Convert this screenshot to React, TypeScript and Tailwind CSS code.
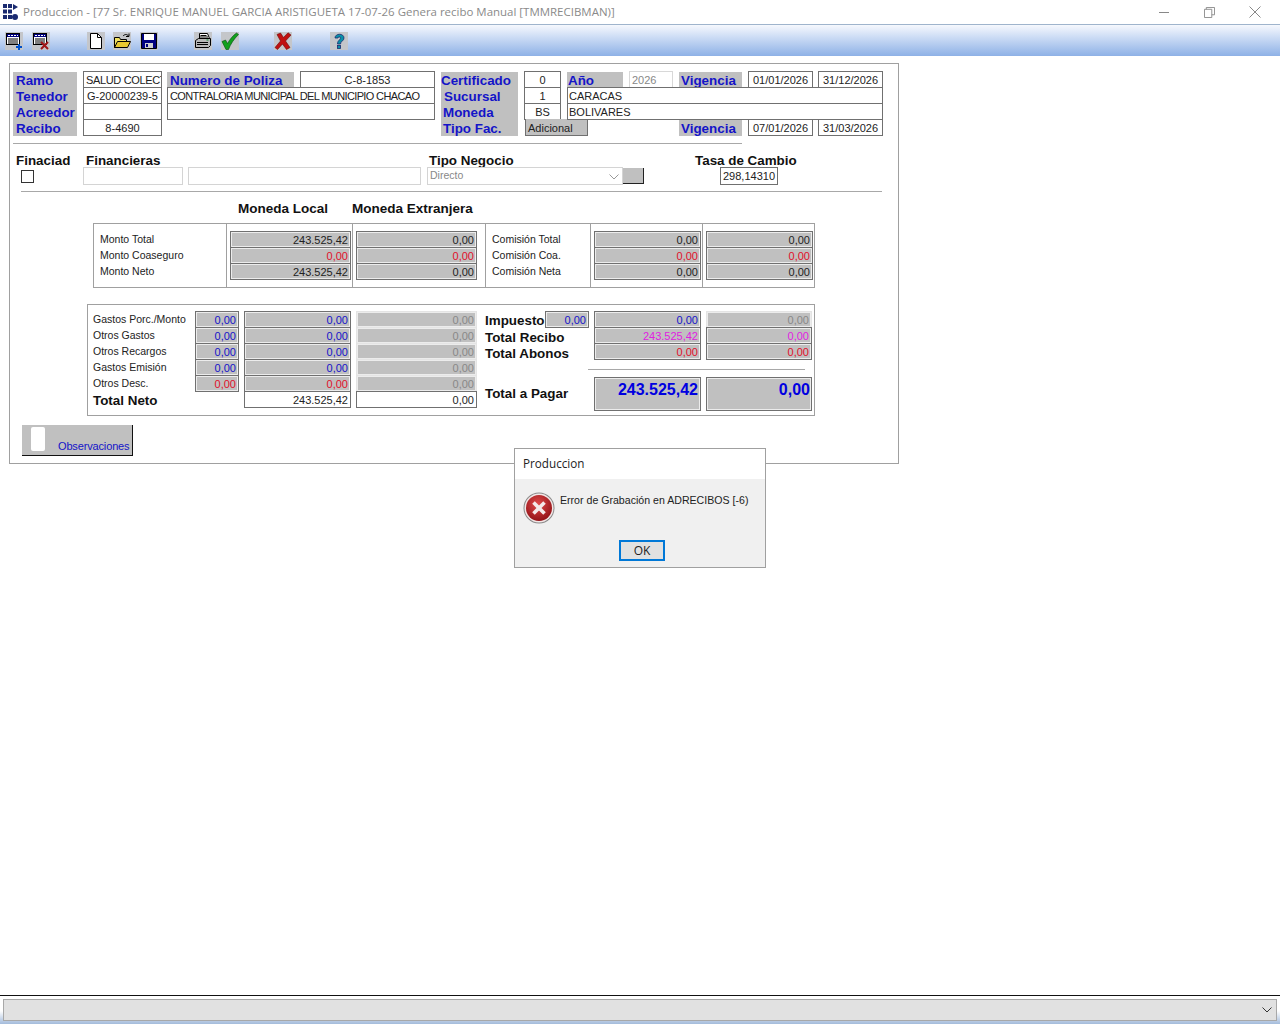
const arial = { fontFamily: '"Liberation Sans", Arial, sans-serif' }

function Field({ className, children }: { className: string; children?: React.ReactNode }) {
  return (
    <div className={`flex h-[17px] shrink-0 items-center overflow-hidden whitespace-nowrap border border-[#707070] bg-white pt-[2px] text-[11px] leading-none text-[#222] ${className}`}>
      {children}
    </div>
  )
}

function Amount({ value, className, color = "text-[#222]", off = false }: { value: string; className: string; color?: string; off?: boolean }) {
  return (
    <div className={`flex h-[17px] shrink-0 items-center justify-end border bg-[#c0c0c0] pr-[2px] pt-[2px] text-[11px] leading-none outline outline-1 -outline-offset-2 outline-white/70 ${off ? "border-[#e4e4e4]" : "border-[#707070]"} ${color} ${className}`}>
      {value}
    </div>
  )
}

function Stack({ children, className = "" }: { children: React.ReactNode; className?: string }) {
  return <div className={`flex shrink-0 flex-col [&>*+*]:-mt-px ${className}`}>{children}</div>
}

function Tool({ children, className }: { children: React.ReactNode; className: string }) {
  return <div className={`h-[18px] w-[18px] shrink-0 bg-[#c4c6ca] ${className}`}>{children}</div>
}

function TableIcon() {
  return (
    <>
      <rect x="1.5" y="1.5" width="13" height="11" fill="#fff" stroke="#000" />
      <rect x="2" y="2" width="12" height="3" fill="#000080" />
      <path d="M3 3.500h2M6 3.500h2M9 3.500h2M12 3.500h1" stroke="#fff" />
      <path d="M3 7h10M3 9h10M3 11h10" stroke="#000" />
    </>
  )
}

function Toolbar() {
  return (
    <div className="flex h-[32px] shrink-0 items-center border-t border-[#9fb4cc] bg-gradient-to-b from-[#f6f8fd] to-[#8eb1e6] pl-[5px]">
      <Tool className="">
        <svg viewBox="0 0 18 18" className="h-full w-full"><TableIcon /><path d="M14 12v6M11 15h6" stroke="#0050c8" strokeWidth="2" /></svg>
      </Tool>
      <Tool className="ml-[9px]">
        <svg viewBox="0 0 18 18" className="h-full w-full"><TableIcon /><path d="M9 10l7 7M16 10l-7 7" stroke="#a01818" strokeWidth="2" /></svg>
      </Tool>
      <Tool className="ml-[37px]">
        <svg viewBox="0 0 18 18" className="h-full w-full"><path d="M3.500 1.500h7l4 4v11h-11z" fill="#fff" stroke="#000" /><path d="M10.500 1.500v4h4" fill="none" stroke="#000" /></svg>
      </Tool>
      <Tool className="ml-[8px]">
        <svg viewBox="0 0 18 18" className="h-full w-full"><path d="M1.500 5.500h5l1 2h6v8h-12z" fill="#f0e060" stroke="#000" /><path d="M1.500 15.500l3-6h13l-3 6z" fill="#e8c830" stroke="#000" /><path d="M10 4c2-2 4-2 5.500 0M16 1.500v3h-3" fill="none" stroke="#000" /></svg>
      </Tool>
      <Tool className="ml-[9px]">
        <svg viewBox="0 0 18 18" className="h-full w-full"><path d="M1.500 1.500h15v15h-15z" fill="#000080" stroke="#000" /><rect x="4" y="2" width="10" height="6" fill="#fff" /><rect x="5" y="11" width="8" height="5" fill="#d0d0d0" /><rect x="6" y="12" width="2" height="3" fill="#000080" /></svg>
      </Tool>
      <Tool className="ml-[36px]">
        <svg viewBox="0 0 18 18" className="h-full w-full"><path d="M5.500 1.500h8l2 5h-10z" fill="#fff" stroke="#000" /><path d="M6.500 3.500h6M6 5h8" stroke="#000" /><path d="M1.500 8.500l3-2h12v7l-2 2h-13z" fill="#b8b8b8" stroke="#000" /><path d="M3 10.500h11M3 12.500h11" stroke="#000" /><path d="M12.500 8h2" stroke="#0a8a30" /></svg>
      </Tool>
      <Tool className="ml-[9px]">
        <svg viewBox="0 0 18 18" className="h-full w-full"><path d="M1 9.500l3.500-1.500 2 3.500C9 7 12 3.500 15.500 1L17.500 2.500C13 7 9.500 12 7.500 17.500H5z" fill="#12a01c" stroke="#064a10" strokeWidth="0.6" /></svg>
      </Tool>
      <Tool className="ml-[35px]">
        <svg viewBox="0 0 18 18" className="h-full w-full"><path d="M3 2.500L6.500 1l3 4.500L14 .8 17 3l-5.500 6 4.500 6.500-3.500 2L8.500 12l-5 5.500-2.500-2L6.500 9z" fill="#c01010" stroke="#6a0808" strokeWidth="0.6" /></svg>
      </Tool>
      <Tool className="ml-[38px]">
        <svg viewBox="0 0 18 18" className="h-full w-full"><path d="M5 6c0-5 9-5 9 0 0 3-3.500 3-3.500 6H7.500c0-4 3-4 3-6 0-1.500-2.500-1.500-2.500 0z" fill="#0890a8" stroke="#1a2a70" strokeWidth="0.8" /><rect x="7.500" y="13.500" width="3" height="3" fill="#0890a8" stroke="#1a2a70" strokeWidth="0.8" /></svg>
      </Tool>
    </div>
  )
}

function HeaderBlock() {
  const label = "text-[13.400px] font-bold leading-[16px] text-[#1414c8]"
  return (
    <div className={`flex items-start pl-[3px] pt-[7px] ${label}`}>
      <div className="mt-px h-[64px] w-[64px] shrink-0 bg-[#c0c0c0] pl-[3px] pt-px">
        <div>Ramo</div>
        <div>Tenedor</div>
        <div>Acreedor</div>
        <div className="h-[15px]">Recibo</div>
      </div>
      <Stack className="ml-[6px] w-[79px] font-normal">
        <Field className="w-full pl-[2px] tracking-[-0.35px]">SALUD COLECT</Field>
        <Field className="w-full justify-center">G-20000239-5</Field>
        <Field className="w-full" />
        <Field className="w-full justify-center">8-4690</Field>
      </Stack>
      <Stack className="ml-[5px] w-[268px]">
        <div className="flex items-start">
          <div className="mt-px h-[16px] w-[127px] overflow-hidden bg-[#c0c0c0] pl-[3px] pt-px">Numero de Poliza</div>
          <Field className="ml-[6px] w-[135px] justify-center font-normal">C-8-1853</Field>
        </div>
        <Field className="w-full pl-[2px] font-normal tracking-[-0.63px]">CONTRALORIA MUNICIPAL DEL MUNICIPIO CHACAO</Field>
        <Field className="w-full" />
      </Stack>
      <div className="ml-[6px] mt-px h-[64px] w-[77px] shrink-0 bg-[#c0c0c0]">
        <div className="pt-px">Certificado</div>
        <div className="pl-[3px]">Sucursal</div>
        <div className="pl-[2px]">Moneda</div>
        <div className="pl-[2px]">Tipo Fac.</div>
      </div>
      <Stack className="ml-[6px] w-[37px] font-normal">
        <Field className="w-full justify-center">0</Field>
        <Field className="w-full justify-center">1</Field>
        <Field className="w-full justify-center">BS</Field>
        <div className="ml-px flex h-[17px] w-[63px] items-center border-x border-b border-[#707070] bg-[#c0c0c0] pl-[2px] pt-[2px] text-[11px] leading-none text-[#222]">Adicional</div>
      </Stack>
      <div className="ml-[6px] flex w-[316px] shrink-0 flex-col">
        <div className="flex items-start">
          <div className="mt-px h-[16px] w-[56px] shrink-0 overflow-hidden bg-[#c0c0c0] pl-px pt-px">Año</div>
          <Field className="ml-[6px] w-[44px] border-[#d8d8d8] pl-[2px] font-normal text-[#888]">2026</Field>
          <div className="ml-[6px] mt-px h-[16px] w-[63px] shrink-0 overflow-hidden bg-[#c0c0c0] pl-[2px] pt-px">Vigencia</div>
          <Field className="ml-[6px] w-[65px] justify-center font-normal">01/01/2026</Field>
          <Field className="ml-[5px] w-[65px] justify-center font-normal">31/12/2026</Field>
        </div>
        <Stack className="-mt-px w-full">
          <Field className="w-full pl-[1px] font-normal">CARACAS</Field>
          <Field className="w-full pl-[1px] font-normal">BOLIVARES</Field>
        </Stack>
        <div className="-mt-px flex items-start">
          <div className="ml-[112px] mt-px h-[16px] w-[63px] shrink-0 overflow-hidden bg-[#c0c0c0] pl-[2px] pt-px">Vigencia</div>
          <Field className="ml-[6px] w-[65px] justify-center font-normal">07/01/2026</Field>
          <Field className="ml-[5px] w-[65px] justify-center font-normal">31/03/2026</Field>
        </div>
      </div>
    </div>
  )
}

function Financing() {
  const head = "text-[13.400px] font-bold leading-[15px] text-[#111]"
  const soft = "flex h-[18px] shrink-0 items-center border border-[#d4d4d4] bg-white"
  return (
    <div className="mt-[9px]">
      <div className={`flex ${head}`}>
        <span className="ml-[6px] w-[70px]">Finaciad</span>
        <span className="w-[343px]">Financieras</span>
        <span className="w-[266px]">Tipo Negocio</span>
        <span>Tasa de Cambio</span>
      </div>
      <div className="-mt-px flex items-center">
        <div className="ml-[11px] h-[13px] w-[13px] shrink-0 border border-[#333] bg-white" />
        <div className={`ml-[49px] w-[100px] ${soft}`} />
        <div className={`ml-[5px] w-[233px] ${soft}`} />
        <div className={`ml-[6px] w-[196px] justify-between pb-[2px] pl-[2px] pr-[3px] text-[10.500px] leading-none text-[#888] ${soft}`}>
          Directo
          <svg viewBox="0 0 10 6" className="mt-[3px] h-[6px] w-[10px]"><path d="M.5.5 5 5 9.500.5" fill="none" stroke="#999" /></svg>
        </div>
        <div className="h-[16px] w-[21px] shrink-0 border-b border-r border-[#222] bg-[#c0c0c0]" />
        <div className="ml-[76px] flex h-[18px] w-[58px] shrink-0 items-center justify-center border border-[#707070] bg-white text-[11px] leading-none text-[#222]">298,14310</div>
      </div>
      <div className="ml-[11px] mt-[6px] h-px w-[861px] bg-[#a8a8a8]" />
    </div>
  )
}

function Label({ text }: { text: string }) {
  return <div className="h-[16px] text-[10.500px] leading-[16px] text-[#222]">{text}</div>
}

function Totals() {
  return (
    <div className="ml-[83px] mt-[6px] flex h-[65px] w-[722px] items-stretch border border-[#a0a0a0]">
      <div className="w-[132px] shrink-0 pl-[6px] pt-[7px]">
        <Label text="Monto Total" />
        <Label text="Monto Coaseguro" />
        <Label text="Monto Neto" />
      </div>
      <div className="w-[126px] shrink-0 border-l border-[#a0a0a0] pl-[3px] pt-[7px]">
        <Stack>
          <Amount className="w-[121px]" value="243.525,42" />
          <Amount className="w-[121px]" value="0,00" color="text-[#e0102a]" />
          <Amount className="w-[121px]" value="243.525,42" />
        </Stack>
      </div>
      <div className="w-[133px] shrink-0 border-l border-[#a0a0a0] pl-[3px] pt-[7px]">
        <Stack>
          <Amount className="w-[121px]" value="0,00" />
          <Amount className="w-[121px]" value="0,00" color="text-[#e0102a]" />
          <Amount className="w-[121px]" value="0,00" />
        </Stack>
      </div>
      <div className="w-[105px] shrink-0 border-l border-[#a0a0a0] pl-[6px] pt-[7px]">
        <Label text="Comisión Total" />
        <Label text="Comisión Coa." />
        <Label text="Comisión Neta" />
      </div>
      <div className="w-[112px] shrink-0 border-l border-[#a0a0a0] pl-[3px] pt-[7px]">
        <Stack>
          <Amount className="w-[107px]" value="0,00" />
          <Amount className="w-[107px]" value="0,00" color="text-[#e0102a]" />
          <Amount className="w-[107px]" value="0,00" />
        </Stack>
      </div>
      <div className="flex-1 border-l border-[#a0a0a0] pl-[3px] pt-[7px]">
        <Stack>
          <Amount className="w-[107px]" value="0,00" />
          <Amount className="w-[107px]" value="0,00" color="text-[#e0102a]" />
          <Amount className="w-[107px]" value="0,00" />
        </Stack>
      </div>
    </div>
  )
}

function Charges() {
  const blue = "text-[#1414c8]"
  const red = "text-[#e0102a]"
  const off = "text-[#888]"
  const pink = "text-[#e020e0]"
  const strong = "h-[16px] text-[13.400px] font-bold leading-[16px] text-[#111]"
  const big = "flex h-[34px] shrink-0 justify-end border border-[#707070] bg-[#c0c0c0] pt-[2px] text-[16px] font-bold leading-[20px] text-[#0000e0] outline outline-1 -outline-offset-2 outline-white/70"
  return (
    <div className="ml-[77px] mt-[16px] flex h-[112px] w-[728px] border border-[#a0a0a0] pt-[6px]">
      <div className="w-[106px] shrink-0 pl-[5px]">
        <Label text="Gastos Porc./Monto" />
        <Label text="Otros Gastos" />
        <Label text="Otros Recargos" />
        <Label text="Gastos Emisión" />
        <Label text="Otros Desc." />
        <div className={`mt-[2px] ${strong}`}>Total Neto</div>
      </div>
      <Stack className="ml-px">
        <Amount className="w-[44px]" value="0,00" color={blue} />
        <Amount className="w-[44px]" value="0,00" color={blue} />
        <Amount className="w-[44px]" value="0,00" color={blue} />
        <Amount className="w-[44px]" value="0,00" color={blue} />
        <Amount className="w-[44px]" value="0,00" color={red} />
      </Stack>
      <Stack className="ml-[5px]">
        <Amount className="w-[107px]" value="0,00" color={blue} />
        <Amount className="w-[107px]" value="0,00" color={blue} />
        <Amount className="w-[107px]" value="0,00" color={blue} />
        <Amount className="w-[107px]" value="0,00" color={blue} />
        <Amount className="w-[107px]" value="0,00" color={red} />
        <Field className="w-[107px] justify-end pr-[2px]">243.525,42</Field>
      </Stack>
      <Stack className="ml-[5px]">
        <Amount off className="w-[121px]" value="0,00" color={off} />
        <Amount off className="w-[121px]" value="0,00" color={off} />
        <Amount off className="w-[121px]" value="0,00" color={off} />
        <Amount off className="w-[121px]" value="0,00" color={off} />
        <Amount off className="w-[121px]" value="0,00" color={off} />
        <Field className="w-[121px] justify-end pr-[2px]">0,00</Field>
      </Stack>
      <div className="ml-[8px] w-[327px] shrink-0">
        <div className="flex">
          <div className="w-[109px] shrink-0">
            <div className="flex items-start">
              <span className={`mt-[2px] w-[60px] shrink-0 ${strong}`}>Impuesto</span>
              <Amount className="w-[44px]" value="0,00" color={blue} />
            </div>
            <div className={`mt-px ${strong}`}>Total Recibo</div>
            <div className={strong}>Total Abonos</div>
          </div>
          <Stack>
            <Amount className="w-[107px]" value="0,00" color={blue} />
            <Amount className="w-[107px]" value="243.525,42" color={pink} />
            <Amount className="w-[107px]" value="0,00" color={red} />
          </Stack>
          <Stack className="ml-[5px]">
            <Amount off className="w-[106px]" value="0,00" color={off} />
            <Amount className="w-[106px]" value="0,00" color={pink} />
            <Amount className="w-[106px]" value="0,00" color={red} />
          </Stack>
        </div>
        <div className="ml-[103px] mt-[7px] h-px w-[217px] bg-[#a8a8a8]" />
        <div className="mt-[7px] flex h-[34px] items-center">
          <span className="w-[109px] shrink-0 text-[13.400px] font-bold text-[#111]">Total a Pagar</span>
          <div className={`w-[107px] pr-[2px] ${big}`}>243.525,42</div>
          <div className={`ml-[5px] w-[106px] pr-[1px] ${big}`}>0,00</div>
        </div>
      </div>
    </div>
  )
}

function ErrorDialog() {
  return (
    <div className="absolute left-[514px] top-[448px] z-10 flex h-[120px] w-[252px] flex-col border border-[#a0a0a0] bg-[#f0f0f0] text-[#222]" style={{ fontFamily: '"Open Sans", "Noto Sans", sans-serif' }}>
      <div className="flex h-[30px] items-center bg-white pl-[8px] text-[11.700px]">Produccion</div>
      <div className="flex pl-[8px] pt-[13px]">
        <svg viewBox="0 0 32 32" className="h-[32px] w-[32px] shrink-0">
          <defs>
            <radialGradient id="err" cx="45%" cy="35%" r="70%">
              <stop offset="0%" stopColor="#e04a4a" />
              <stop offset="100%" stopColor="#8e0f14" />
            </radialGradient>
          </defs>
          <circle cx="16" cy="16" r="15.500" fill="#8a8a8a" />
          <circle cx="16" cy="16" r="14.500" fill="#f2e6e6" />
          <circle cx="16" cy="16" r="13" fill="url(#err)" />
          <path d="M10.500 10.500l11 11M21.500 10.500l-11 11" stroke="#f4eaea" strokeWidth="3.600" />
        </svg>
        <div className="ml-[5px] whitespace-nowrap pt-px text-[10.600px] leading-[14px]" style={arial}>Error de Grabación en ADRECIBOS [-6)</div>
      </div>
      <div className="ml-[104px] mt-[16px] flex h-[21px] w-[46px] items-center justify-center border-2 border-[#0078d7] bg-[#e1e1e1] text-[12px]">OK</div>
    </div>
  )
}

export default function App() {
  return (
    <div className="relative flex h-[1024px] w-[1280px] flex-col overflow-hidden bg-white" style={arial}>
      <div className="flex h-[24px] shrink-0 items-center" style={{ fontFamily: '"Open Sans", "Noto Sans", sans-serif' }}>
        <svg viewBox="0 0 16 18" className="ml-[2px] h-[18px] w-[16px] shrink-0">
          <path d="M1 1h4v4H1zM6 1h4v4H6zM1 6.500h4v4H1zM6 6.500h4v4H6zM1 12h4v4H1zM6 12h4v4H6zM11 1l5 3-5 3z" fill="#1a2a70" />
          <circle cx="13" cy="14" r="3" fill="#1a2a70" />
        </svg>
        <span className="ml-[5px] whitespace-nowrap text-[11.480px] leading-none text-[#8a8a8a]">Produccion - [77 Sr. ENRIQUE MANUEL GARCIA ARISTIGUETA 17-07-26 Genera recibo Manual [TMMRECIBMAN)]</span>
        <div className="ml-auto flex items-center">
          <div className="h-px w-[10px] bg-[#888]" />
          <svg viewBox="0 0 12 12" className="ml-[35px] h-[11px] w-[11px]"><path d="M.5 2.500h8v9h-8zM2.500 2.500v-2h9v8h-3" fill="none" stroke="#888" /></svg>
          <svg viewBox="0 0 12 12" className="ml-[34px] mr-[19px] h-[12px] w-[12px]"><path d="M.5.5l11 11M11.500.5l-11 11" fill="none" stroke="#888" /></svg>
        </div>
      </div>
      <Toolbar />
      <main className="flex-1">
        <div className="ml-[9px] mt-[7px] h-[401px] w-[890px] border border-[#a0a0a0]">
          <HeaderBlock />
          <div className="ml-[3px] mt-[7px] h-px w-[729px] bg-[#a8a8a8]" />
          <Financing />
          <div className="mt-[9px] flex text-[13.500px] font-bold leading-[16px] text-[#111]">
            <span className="ml-[228px] w-[114px]">Moneda Local</span>
            <span>Moneda Extranjera</span>
          </div>
          <Totals />
          <Charges />
          <div className="ml-[12px] mt-[9px] flex h-[31px] w-[111px] border-b border-r border-[#111] bg-[#c0c0c0] pl-[9px] pt-[2px]">
            <div className="h-[24px] w-[14px] shrink-0 rounded-[2px] bg-white" />
            <span className="ml-[13px] mt-[12px] whitespace-nowrap text-[11px] leading-[14px] tracking-[-0.15px] text-[#1414c8]">Observaciones</span>
          </div>
        </div>
      </main>
      <div className="h-[29px] shrink-0 border-t border-[#111] bg-white pt-px">
        <div className="h-[28px] bg-gradient-to-b from-white from-50% to-[#9db6d8] pl-[3px] pr-[3px] pt-[2px]">
          <div className="flex h-[22px] items-center justify-end border border-[#a8a8a8] bg-[#e1e1e1] pr-[4px]">
            <svg viewBox="0 0 10 6" className="h-[6px] w-[10px]"><path d="M.5.5 5 5 9.500.5" fill="none" stroke="#333" /></svg>
          </div>
        </div>
      </div>
      <ErrorDialog />
    </div>
  )
}
